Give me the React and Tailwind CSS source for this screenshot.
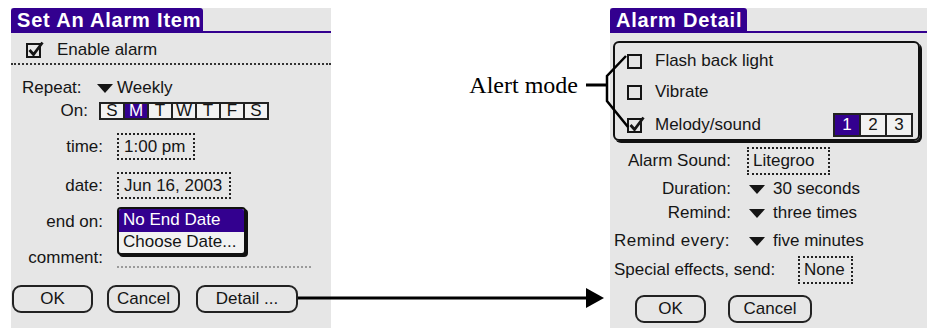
import React from 'react';

const ink = '#151515';

function Checkbox({ checked }) {
  return (
    <svg width="20" height="18" viewBox="0 0 20 18" className="shrink-0">
      <rect x="1" y="3" width="13" height="13" fill="none" stroke={ink} strokeWidth="2" />
      {checked && <path d="M3.5 9 L7.5 13.5 L16.5 1.5" fill="none" stroke={ink} strokeWidth="2.8" />}
    </svg>
  );
}

function Arrow() {
  return (
    <svg width="16" height="9" viewBox="0 0 16 9" className="shrink-0">
      <path d="M0 0H16L8 9Z" fill={ink} />
    </svg>
  );
}

function Title({ text, tabWidth }) {
  return (
    <div className="flex items-end h-[25px]">
      <div
        className={`${tabWidth} h-full bg-[#33008f] rounded-t-[3px] text-white font-bold text-[20px] leading-[25px] tracking-[0.8px] pl-[6px] whitespace-nowrap`}
      >
        {text}
      </div>
      <div className="flex-1 h-[2px] bg-[#33008f]"></div>
    </div>
  );
}

function Button({ children, width }) {
  return (
    <div className={`${width} h-[28px] border-2 border-[#222] rounded-[9px] flex items-center justify-center leading-[20px]`}>
      {children}
    </div>
  );
}

function Dotted({ children, width }) {
  return (
    <div className={`${width} h-[27px] border-2 border-dotted border-[#222] flex items-center px-[5px] leading-[20px] whitespace-nowrap`}>
      {children}
    </div>
  );
}

function SetAlarm() {
  const days = ['S', 'M', 'T', 'W', 'T', 'F', 'S'];
  return (
    <div className="w-[320px] h-[320px] shrink-0 ml-[11px] mt-[8px] bg-[#e6e6e6]">
      <Title text="Set An Alarm Item" tabWidth="w-[192px]" />

      <div className="mt-[7px] h-[20px] flex items-center pl-[15px] leading-[20px]">
        <Checkbox checked />
        <span className="ml-[11px]">Enable alarm</span>
      </div>

      <div className="mt-[3px] border-t-2 border-dotted border-[#333]"></div>

      <div className="mt-[13px] h-[20px] flex items-center pl-[11px] leading-[20px]">
        <span className="w-[75px]">Repeat:</span>
        <Arrow />
        <span className="ml-[4px]">Weekly</span>
      </div>

      <div className="mt-[4px] h-[18px] flex items-center leading-[14px]">
        <span className="w-[88px] pr-[11px] text-right">On:</span>
        <div className="flex border-2 border-[#222] h-[18px]">
          {days.map((d, i) => (
            <div
              key={i}
              className={`h-[14px] flex items-center justify-center ${i > 0 ? 'w-[24px] border-l-2 border-[#222]' : 'w-[22px]'} ${i === 1 ? 'bg-[#33008f] text-white' : 'bg-[#f2f2f2]'}`}
            >
              {d}
            </div>
          ))}
        </div>
      </div>

      <div className="mt-[13px] flex items-center">
        <span className="w-[92px] text-right">time:</span>
        <div className="ml-[14px]">
          <Dotted width="w-[78px]">1:00 pm</Dotted>
        </div>
      </div>

      <div className="mt-[12px] flex items-center">
        <span className="w-[92px] text-right">date:</span>
        <div className="ml-[14px]">
          <Dotted width="w-[114px]">Jun 16, 2003</Dotted>
        </div>
      </div>

      <div className="relative mt-[13px] h-[20px] flex items-center leading-[20px]">
        <span className="w-[92px] text-right">end on:</span>
        <div className="absolute left-[106px] top-[-5px] w-[129px] h-[48px] border-2 border-[#111] rounded-[4px] bg-[#f2f2f2] shadow-[2px_2px_0_#111] overflow-hidden">
          <div className="h-[23px] bg-[#33008f] text-white pl-[4px] leading-[22px]">No End Date</div>
          <div className="h-[21px] pl-[4px] leading-[20px]">Choose Date...</div>
        </div>
      </div>

      <div className="mt-[16px] h-[20px] flex items-center leading-[20px]">
        <span className="w-[92px] text-right">comment:</span>
        <div className="ml-[14px] w-[194px] h-[20px] border-b-2 border-dotted border-[#9a9a9a]"></div>
      </div>

      <div className="mt-[17px] flex pl-[1px]">
        <Button width="w-[81px]">OK</Button>
        <div className="ml-[14px]">
          <Button width="w-[73px]">Cancel</Button>
        </div>
        <div className="ml-[16px]">
          <Button width="w-[102px]">Detail ...</Button>
        </div>
      </div>
    </div>
  );
}

function AlarmDetail() {
  return (
    <div className="w-[320px] h-[320px] shrink-0 mt-[8px] bg-[#e6e6e6]">
      <Title text="Alarm Detail" tabWidth="w-[137px]" />

      <div className="ml-[3px] mt-[8px] w-[307px] h-[100px] border-2 border-[#111] rounded-[6px] shadow-[2px_2px_0_#111] pl-[12px] pr-[5px] pt-[8px]">
        <div className="h-[20px] flex items-center leading-[20px]">
          <Checkbox />
          <span className="ml-[8px]">Flash back light</span>
        </div>
        <div className="mt-[11px] h-[20px] flex items-center leading-[20px]">
          <Checkbox />
          <span className="ml-[8px]">Vibrate</span>
        </div>
        <div className="mt-[11px] h-[24px] flex items-center leading-[20px]">
          <Checkbox checked />
          <span className="ml-[8px]">Melody/sound</span>
          <div className="ml-auto flex border-2 border-[#222] h-[24px]">
            {['1', '2', '3'].map((n, i) => (
              <div
                key={n}
                className={`h-[20px] flex items-center justify-center ${i > 0 ? 'w-[26px] border-l-2 border-[#222]' : 'w-[24px]'} ${i === 0 ? 'bg-[#33008f] text-white' : 'bg-[#f2f2f2]'}`}
              >
                {n}
              </div>
            ))}
          </div>
        </div>
      </div>

      <div className="mt-[6px] flex items-center">
        <span className="w-[121px] text-right">Alarm Sound:</span>
        <div className="ml-[16px]">
          <div className="w-[83px] h-[28px] border-2 border-dotted border-[#222] flex items-center px-[4px] leading-[20px]">Litegroo</div>
        </div>
      </div>

      <div className="mt-[4px] h-[20px] flex items-center leading-[20px]">
        <span className="w-[121px] text-right">Duration:</span>
        <span className="ml-[18px]"><Arrow /></span>
        <span className="ml-[8px]">30 seconds</span>
      </div>

      <div className="mt-[4px] h-[20px] flex items-center leading-[20px]">
        <span className="w-[121px] text-right">Remind:</span>
        <span className="ml-[18px]"><Arrow /></span>
        <span className="ml-[8px]">three times</span>
      </div>

      <div className="mt-[8px] h-[20px] flex items-center leading-[20px]">
        <span className="w-[139px] pl-[4px] tracking-[0.5px]">Remind every:</span>
        <Arrow />
        <span className="ml-[8px]">five minutes</span>
      </div>

      <div className="mt-[5px] flex items-center">
        <span className="w-[188px] pl-[4px] whitespace-nowrap">Special effects, send:</span>
        <div className="w-[55px] h-[28px] border-2 border-dotted border-[#222] flex items-center px-[4px] leading-[20px]">None</div>
      </div>

      <div className="mt-[11px] flex pl-[25px]">
        <Button width="w-[71px]">OK</Button>
        <div className="ml-[22px]">
          <Button width="w-[84px]">Cancel</Button>
        </div>
      </div>
    </div>
  );
}

export default function App() {
  return (
    <div className="relative w-[927px] h-[328px] overflow-hidden bg-white flex font-['Liberation_Sans',Arial,sans-serif] text-[17px] text-[#151515]">
      <SetAlarm />

      {/* annotation column */}
      <div className="w-[279px] shrink-0 pt-[71px] pr-[32px] text-right font-['Liberation_Serif','Times_New_Roman',serif] text-[24px] leading-[28px] text-black">
        Alert mode
      </div>

      <AlarmDetail />

      <svg className="absolute left-0 top-0 pointer-events-none" width="927" height="328" viewBox="0 0 927 328">
        <line x1="298" y1="298" x2="590" y2="298" stroke="#000" strokeWidth="3" />
        <path d="M586 288 L604 298 L586 308 Z" fill="#000" />
        <line x1="586" y1="85" x2="607" y2="85" stroke="#000" strokeWidth="3" />
        <path d="M626 56 L607 76 L607 101 L628 127" fill="none" stroke="#000" strokeWidth="2.5" />
      </svg>
    </div>
  );
}
